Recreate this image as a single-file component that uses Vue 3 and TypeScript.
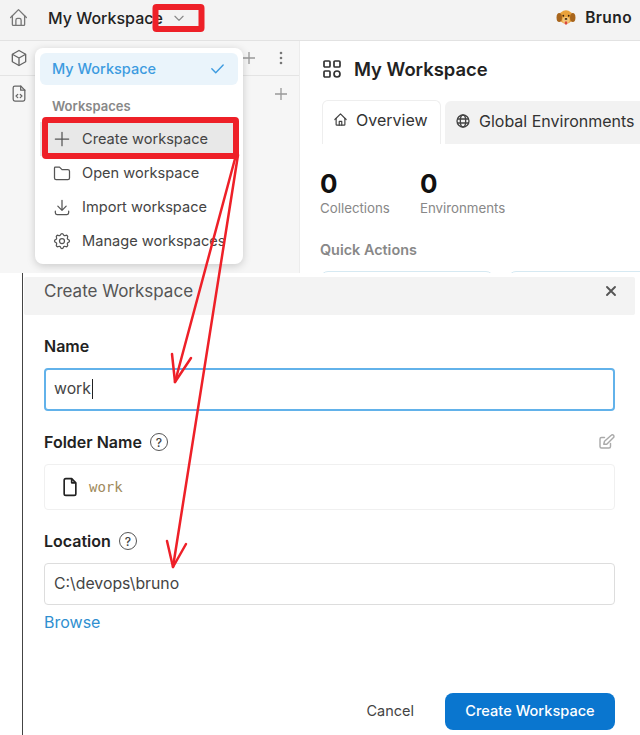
<script setup lang="ts">
const menuItems = ['Open workspace', 'Import workspace', 'Manage workspaces']
</script>

<template>
  <div class="shot">
    <section class="app">
      <header class="topbar">
        <svg class="home" width="21" height="21" viewBox="0 0 24 24" fill="none" stroke="#777" stroke-width="1.500" stroke-linecap="round" stroke-linejoin="round">
          <path d="M3 12l9-9 9 9" /><path d="M5 10v10a1 1 0 0 0 1 1h12a1 1 0 0 0 1-1V10" /><path d="M9 21v-6a2 2 0 0 1 2-2h2a2 2 0 0 1 2 2v6" />
        </svg>
        <span class="ws-name">My Workspace</span>
        <svg class="chev" width="14" height="14" viewBox="0 0 24 24" fill="none" stroke="#888" stroke-width="2" stroke-linecap="round" stroke-linejoin="round"><path d="M5 9l7 7 7-7" /></svg>
        <span class="spacer"></span>
        <svg width="20" height="18" viewBox="0 0 22 20" class="dog">
          <ellipse cx="11" cy="9" rx="7.500" ry="7.500" fill="#e9a23b" />
          <ellipse cx="3.500" cy="9.500" rx="3" ry="5" fill="#a8651c" />
          <ellipse cx="18.500" cy="9.500" rx="3" ry="5" fill="#a8651c" />
          <ellipse cx="11" cy="12.500" rx="4" ry="3.500" fill="#f3c57a" />
          <circle cx="8" cy="7.500" r="1" fill="#3a2410" /><circle cx="14" cy="7.500" r="1" fill="#3a2410" />
          <ellipse cx="11" cy="11" rx="1.500" ry="1" fill="#3a2410" />
          <ellipse cx="11" cy="15.500" rx="1.500" ry="2" fill="#d9473f" />
        </svg>
        <span class="brand">Bruno</span>
      </header>

      <div class="body">
        <aside class="sidebar">
          <div class="side-row first">
            <svg class="side-icon" width="20" height="20" viewBox="0 0 24 24" fill="none" stroke="#666" stroke-width="1.600" stroke-linejoin="round"><path d="M12 3l8 4.500v9L12 21l-8-4.500v-9z" /><path d="M4 7.500l8 4.500 8-4.500M12 12v9" /></svg>
            <span class="spacer"></span>
            <svg class="plus p1" width="14" height="14" viewBox="0 0 14 14" stroke="#999" stroke-width="1.300"><path d="M7 1v12M1 7h12" /></svg>
            <svg width="14" height="16" viewBox="0 0 14 16" fill="#777"><circle cx="7" cy="3" r="1.300" /><circle cx="7" cy="8" r="1.300" /><circle cx="7" cy="13" r="1.300" /></svg>
          </div>
          <div class="side-row second">
            <svg class="side-icon" width="20" height="21" viewBox="0 0 24 24" fill="none" stroke="#666" stroke-width="1.500" stroke-linecap="round" stroke-linejoin="round"><path d="M14 3H7a2 2 0 0 0-2 2v14a2 2 0 0 0 2 2h10a2 2 0 0 0 2-2V8z" /><path d="M14 3v5h5" /><path d="M10.500 13l-2 2 2 2M13.500 13l2 2-2 2" /></svg>
            <span class="spacer"></span>
            <svg class="plus" width="14" height="14" viewBox="0 0 14 14" stroke="#999" stroke-width="1.300"><path d="M7 1v12M1 7h12" /></svg>
          </div>
        </aside>

        <main class="main">
          <div class="title-row">
            <svg width="20" height="20" viewBox="0 0 20 20" fill="none" stroke="#333" stroke-width="1.700"><rect x="2" y="2" width="6" height="6" rx="1" /><rect x="12" y="2" width="6" height="6" rx="1" /><rect x="2" y="12" width="6" height="6" rx="1" /><circle cx="15" cy="15" r="3" /></svg>
            <h1>My Workspace</h1>
          </div>
          <div class="tabs">
            <div class="tab active">
              <svg width="15" height="15" viewBox="0 0 24 24" fill="none" stroke="#444" stroke-width="1.900" stroke-linecap="round" stroke-linejoin="round"><path d="M3 12l9-9 9 9" /><path d="M5 10v10a1 1 0 0 0 1 1h12a1 1 0 0 0 1-1V10" /><path d="M10 21v-6h4v6" /></svg>
              Overview
            </div>
            <div class="tab other">
              <svg width="16" height="16" viewBox="0 0 24 24" fill="none" stroke="#444" stroke-width="2"><circle cx="12" cy="12" r="9" /><path d="M3 9h18M3 15h18" /><ellipse cx="12" cy="12" rx="4" ry="9" /></svg>
              Global Environments
            </div>
          </div>
          <div class="stats">
            <div class="stat"><strong>0</strong><span>Collections</span></div>
            <div class="stat"><strong>0</strong><span>Environments</span></div>
          </div>
          <h2>Quick Actions</h2>
          <div class="cards"><div class="card c1"></div><div class="card c2"></div></div>
        </main>
      </div>

      <div class="menu">
        <div class="current">
          <span>My Workspace</span>
          <svg width="17" height="17" viewBox="0 0 24 24" fill="none" stroke="#3d9be0" stroke-width="2" stroke-linecap="round" stroke-linejoin="round"><path d="M4 12.500l5.500 5.500L20 7" /></svg>
        </div>
        <div class="menu-label">Workspaces</div>
        <div class="menu-item hover">
          <svg width="20" height="20" viewBox="0 0 24 24" fill="none" stroke="#555" stroke-width="1.500" stroke-linecap="round"><path d="M12 4v16M4 12h16" /></svg>
          Create workspace
        </div>
        <div v-for="(item, i) in menuItems" :key="item" class="menu-item">
          <svg v-if="i === 0" width="20" height="20" viewBox="0 0 24 24" fill="none" stroke="#555" stroke-width="1.500" stroke-linejoin="round"><path d="M4 5h5l3 3h7a2 2 0 0 1 2 2v8a2 2 0 0 1-2 2H5a2 2 0 0 1-2-2V6a1 1 0 0 1 1-1z" /></svg>
          <svg v-else-if="i === 1" width="20" height="20" viewBox="0 0 24 24" fill="none" stroke="#555" stroke-width="1.500" stroke-linecap="round" stroke-linejoin="round"><path d="M4 17v2a2 2 0 0 0 2 2h12a2 2 0 0 0 2-2v-2" /><path d="M7 11l5 5 5-5M12 4v12" /></svg>
          <svg v-else width="20" height="20" viewBox="0 0 24 24" fill="none" stroke="#555" stroke-width="1.500" stroke-linejoin="round"><path d="M10.325 4.317c.426-1.756 2.924-1.756 3.350 0a1.724 1.724 0 0 0 2.573 1.066c1.543-.940 3.310.826 2.370 2.370a1.724 1.724 0 0 0 1.065 2.572c1.756.426 1.756 2.924 0 3.350a1.724 1.724 0 0 0-1.066 2.573c.940 1.543-.826 3.310-2.370 2.370a1.724 1.724 0 0 0-2.572 1.065c-.426 1.756-2.924 1.756-3.350 0a1.724 1.724 0 0 0-2.573-1.066c-1.543.940-3.310-.826-2.370-2.370a1.724 1.724 0 0 0-1.065-2.572c-1.756-.426-1.756-2.924 0-3.350a1.724 1.724 0 0 0 1.066-2.573c-.940-1.543.826-3.310 2.370-2.370c1 .608 2.296.070 2.572-1.065z" /><circle cx="12" cy="12" r="3" /></svg>
          {{ item }}
        </div>
      </div>
    </section>

    <section class="dialog-shot">
      <div class="dialog">
        <div class="dialog-head">
          <span>Create Workspace</span>
          <svg width="12" height="12" viewBox="0 0 12 12" stroke="#555" stroke-width="1.900" stroke-linecap="round"><path d="M2 2l8 8M10 2l-8 8" /></svg>
        </div>
        <div class="form">
          <label class="lbl name-lbl">Name</label>
          <div class="field focus"><span>work</span><i class="caret"></i></div>

          <div class="lbl-row folder-lbl">
            <label class="lbl">Folder Name</label>
            <span class="help">?</span>
            <span class="spacer"></span>
            <svg width="18" height="18" viewBox="0 0 24 24" fill="none" stroke="#aaa" stroke-width="1.900" stroke-linecap="round" stroke-linejoin="round"><path d="M10 6H6a2 2 0 0 0-2 2v10a2 2 0 0 0 2 2h10a2 2 0 0 0 2-2v-4" /><path d="M9 15l1-4 9-8a2 2 0 0 1 3 3l-9 9z" /></svg>
          </div>
          <div class="folder-box">
            <svg width="22" height="20" viewBox="0 0 24 24" fill="none" stroke="#222" stroke-width="2" stroke-linejoin="round"><path d="M14 2H7a2 2 0 0 0-2 2v16a2 2 0 0 0 2 2h10a2 2 0 0 0 2-2V7z" /><path d="M14 2v5h5" /></svg>
            <code>work</code>
          </div>

          <div class="lbl-row loc-lbl">
            <label class="lbl">Location</label>
            <span class="help">?</span>
          </div>
          <div class="field plain"><span>C:\devops\bruno</span></div>
          <a class="browse">Browse</a>

          <div class="actions">
            <span class="cancel">Cancel</span>
            <button class="submit">Create Workspace</button>
          </div>
        </div>
      </div>
    </section>

    <svg class="marks" width="640" height="735" viewBox="0 0 640 735" fill="none" stroke="#ee2028">
      <rect x="155.500" y="7" width="46" height="22" rx="1" stroke-width="6" />
      <rect x="45" y="120" width="191" height="36" rx="1" stroke-width="6" />
      <g stroke-width="2.500" stroke-linecap="round" stroke-linejoin="round">
        <path d="M236 155L175 382" />
        <path d="M172 354L175 382L191 358" />
        <path d="M238 155L173 567" />
        <path d="M167 541L173 567L186 544" />
      </g>
    </svg>
  </div>
</template>

<style>
html, body { margin: 0; background: #fff; }
</style>

<style scoped>
.shot {
  position: relative;
  width: 640px;
  height: 735px;
  overflow: hidden;
  background: #fff;
  font-family: Inter, "Liberation Sans", sans-serif;
  color: #333;
}
.spacer { flex: 1; }

.app { position: relative; height: 273px; overflow: hidden; }
.topbar {
  height: 40px;
  box-sizing: content-box;
  display: flex;
  align-items: center;
  padding: 0 8px 0 8px;
  background: #f3f3f3;
  border-bottom: 1px solid #e2e2e2;
}
.topbar > * { position: relative; top: -2.500px; }
.home { flex: none; }
.ws-name { margin-left: 19px; font-size: 16px; font-weight: 500; color: #222; }
.chev { margin-left: 9px; }
.dog { margin-right: 9px; }
.brand { font-size: 15.500px; font-weight: 600; letter-spacing: .4px; color: #222; }

.body { display: flex; height: 232px; }
.sidebar { flex: none; width: 299px; background: #f6f6f6; border-right: 1px solid #ececec; }
.side-row { display: flex; align-items: center; padding: 0 11px 0 9px; }
.side-row.first { height: 34px; border-bottom: 1px solid #e4e4e4; }
.side-row.second { height: 36px; padding-bottom: 1px; box-sizing: border-box; }
.plus { flex: none; }
.p1 { margin-right: 18px; }
.side-row.second .plus { margin-right: 0; }

.main { flex: 1; padding-left: 20px; min-width: 0; overflow: hidden; }
.title-row { display: flex; align-items: center; gap: 12px; height: 59px; box-sizing: border-box; padding: 0 0 3px 2px; }
h1 { margin: 0; font-size: 18.400px; font-weight: 600; color: #222; }
.tabs { display: flex; gap: 4px; height: 44px; margin-left: 2px; }
.tab {
  flex: none;
  display: flex;
  align-items: center;
  gap: 8px;
  height: 43px;
  padding: 0 10px;
  box-sizing: border-box;
  background: #f2f2f2;
  border-radius: 6px 6px 0 0;
  font-size: 16px;
  color: #333;
  white-space: nowrap;
}
.tab.other { margin-top: 1px; padding-bottom: 4px; }
.tab.active {
  width: 119px;
  height: 44px;
  padding-bottom: 6px;
  background: #fff;
  border: 1px solid #eee;
  border-bottom: 0;
}
.stats { display: flex; gap: 30px; margin-top: 25px; }
.stat { display: flex; flex-direction: column; }
.stat strong { font-size: 26px; line-height: 30px; font-weight: 700; color: #111; }
.stat span { margin-top: 1px; font-size: 13.300px; line-height: 16px; color: #888; }
h2 { margin: 25px 0 0; font-size: 14.400px; line-height: 18px; font-weight: 600; color: #888; }
.cards { display: flex; gap: 14px; margin-top: 12px; }
.card { flex: none; height: 30px; border: 1px solid #d6e9f2; border-radius: 8px; box-sizing: border-box; }
.c1 { width: 174px; }
.c2 { width: 174px; }

.menu {
  position: absolute;
  left: 35px;
  top: 48px;
  width: 208px;
  height: 216px;
  box-sizing: border-box;
  padding: 5px;
  background: #fff;
  border-radius: 8px;
  box-shadow: 0 2px 8px rgba(0, 0, 0, .18);
}
.current {
  display: flex;
  align-items: center;
  justify-content: space-between;
  height: 32px;
  padding: 0 12px 2px;
  box-sizing: border-box;
  background: #eaf4fb;
  border-radius: 6px;
  color: #3d9be0;
  font-size: 14.500px;
  font-weight: 500;
}
.menu-label { margin: 13px 0 0 12px; height: 24px; font-size: 13px; line-height: 16px; font-weight: 600; color: #888; }
.menu-item {
  display: flex;
  align-items: center;
  gap: 10px;
  height: 34px;
  padding: 0 11px 0 12px;
  font-size: 14.600px;
  color: #444;
  white-space: nowrap;
}
.menu-item.hover { background: #e8e8e8; }

.dialog-shot { height: 462px; border-left: 1px solid #444; margin-left: 22px; padding: 4px 0 0 1px; box-sizing: border-box; }
.dialog { width: 611px; }
.dialog-head {
  display: flex;
  align-items: center;
  justify-content: space-between;
  height: 38px;
  padding: 0 18px 10px 20px;
  box-sizing: border-box;
  background: #f3f3f3;
  border-radius: 2px;
  font-size: 17px;
  color: #555;
}
.form { padding: 0 20px; display: flex; flex-direction: column; }
.lbl { font-size: 16px; font-weight: 600; color: #222; line-height: 20px; }
.name-lbl { margin-top: 21px; }
.field {
  display: flex;
  align-items: center;
  box-sizing: border-box;
  border-radius: 4px;
  padding: 0 9px 2px;
  font-size: 15.800px;
  color: #444;
}
.field.focus { margin-top: 12px; height: 43px; padding-left: 8px; border: 2px solid #62b2ea; }
.caret { display: inline-block; width: 1px; height: 20px; background: #222; margin-left: 1px; }
.lbl-row { display: flex; align-items: center; gap: 8px; }
.folder-lbl { margin-top: 21px; }
.help {
  width: 18px;
  height: 18px;
  border: 1.300px solid #555;
  border-radius: 50%;
  box-sizing: border-box;
  display: flex;
  align-items: center;
  justify-content: center;
  font-size: 12px;
  font-weight: 500;
  color: #444;
}
.folder-box {
  display: flex;
  align-items: center;
  gap: 8px;
  margin-top: 12px;
  height: 46px;
  box-sizing: border-box;
  padding-left: 14px;
  border: 1px solid #f0f0f0;
  border-radius: 4px;
}
code { font-family: "DejaVu Sans Mono", "Liberation Mono", monospace; font-size: 14px; color: #a08a5c; }
.loc-lbl { margin-top: 21px; }
.field.plain { margin-top: 12px; height: 42px; border: 1px solid #ddd; }
.browse { margin-top: 7px; font-size: 16px; line-height: 20px; color: #2f8fd0; }
.actions { display: flex; align-items: center; justify-content: flex-end; gap: 31px; margin-top: 61px; }
.cancel { font-size: 14.500px; color: #444; padding-bottom: 3px; }
.submit {
  width: 170px;
  height: 37px;
  border: 0;
  border-radius: 8px;
  padding: 0 0 2px;
  background: #0a76cf;
  color: #fff;
  font: 500 14.600px Inter, "Liberation Sans", sans-serif;
}
.marks { position: absolute; left: 0; top: 0; pointer-events: none; }
</style>
